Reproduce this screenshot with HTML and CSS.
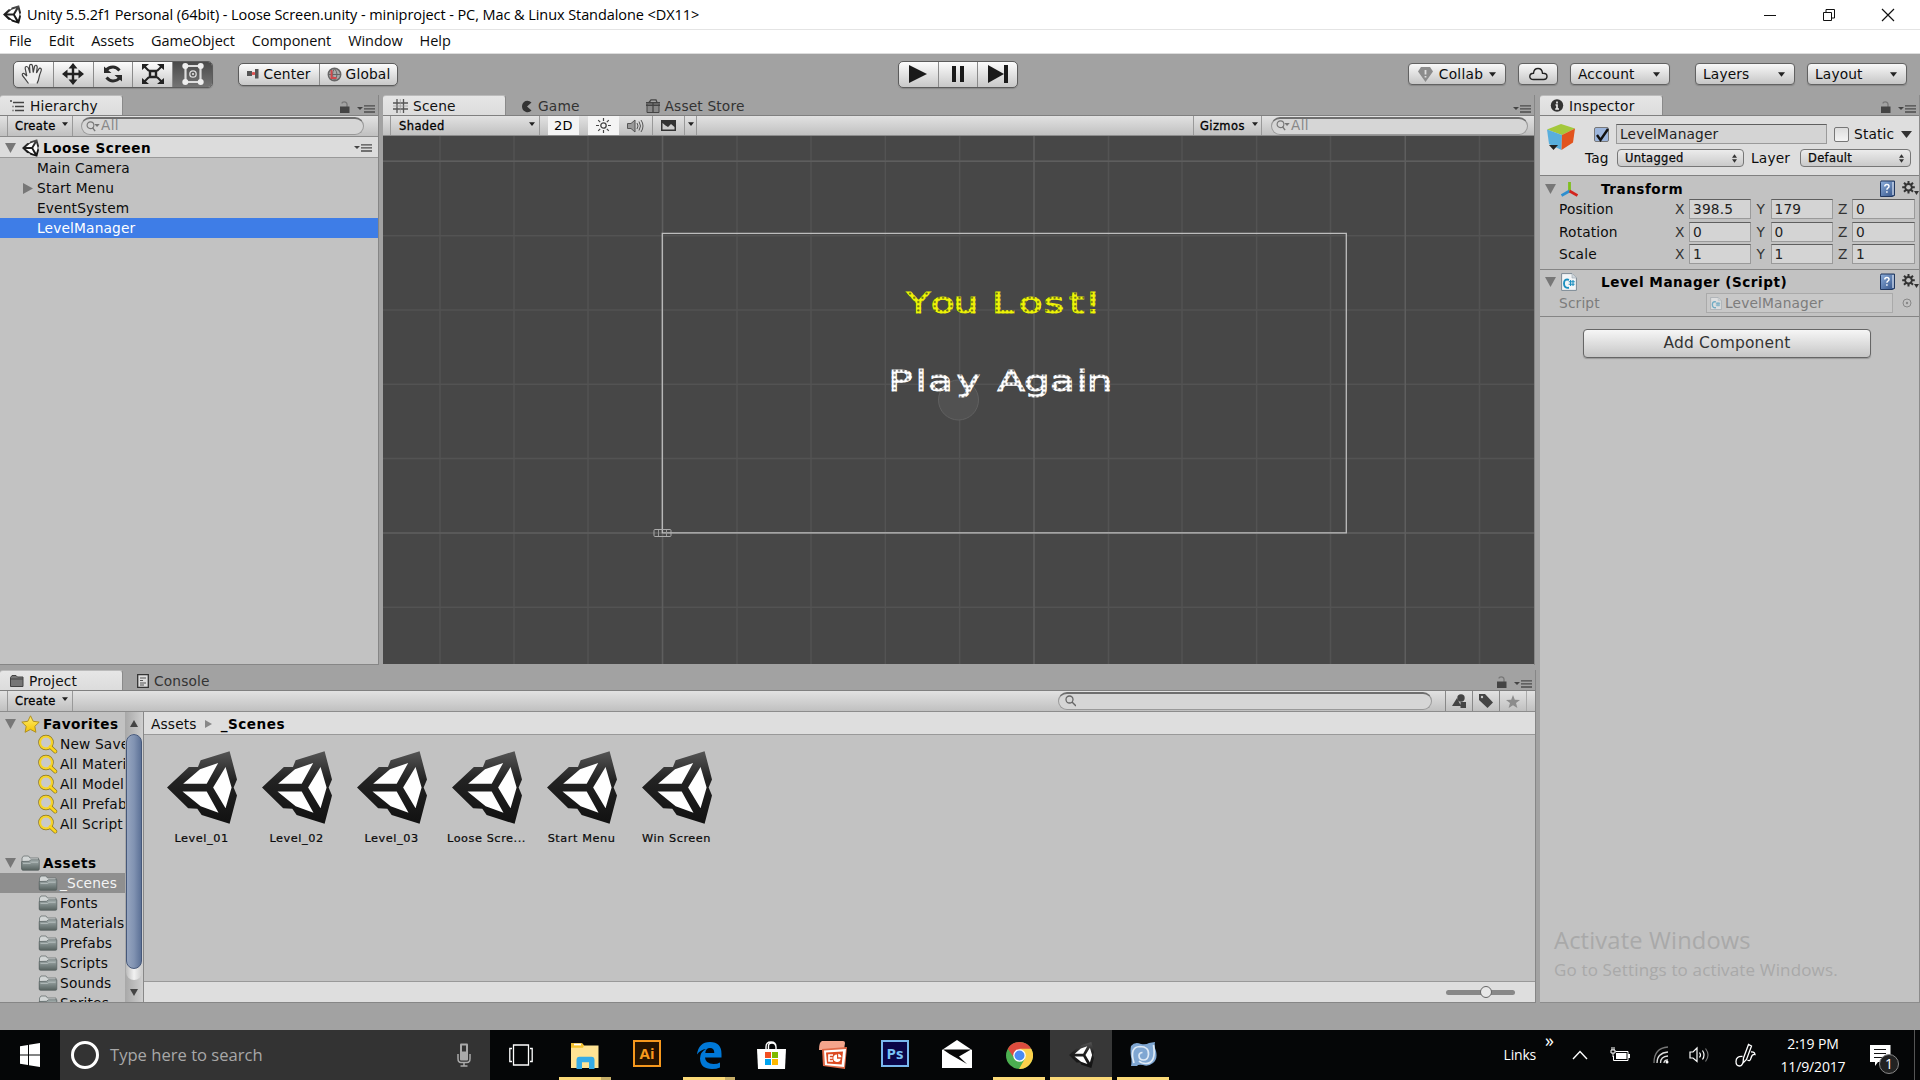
FILE: index.html
```html
<!DOCTYPE html>
<html lang="en">
<head>
<meta charset="utf-8">
<title>Unity 5.5.2f1 Personal (64bit) - Loose Screen.unity - miniproject</title>
<link rel="stylesheet" href="styles.css">
</head>
<body>
<svg class="defs" width="0" height="0">
  <defs>
    <linearGradient id="shade" x1="0" y1="0" x2="0" y2="1"><stop offset="0" stop-color="#555"/><stop offset=".4" stop-color="#222"/><stop offset="1" stop-color="#111"/></linearGradient>
    <linearGradient id="steel" x1="0" y1="0" x2="0" y2="1"><stop offset="0" stop-color="#a3adad"/><stop offset="1" stop-color="#56625f"/></linearGradient>
    <linearGradient id="gold" x1="0" y1="0" x2="0" y2="1"><stop offset="0" stop-color="#ffee70"/><stop offset="1" stop-color="#f5c400"/></linearGradient>
    <linearGradient id="book" x1="0" y1="0" x2="1" y2="1"><stop offset="0" stop-color="#8fb0dc"/><stop offset="1" stop-color="#2f4f86"/></linearGradient>
  </defs>
  <symbol id="unity" viewBox="0 0 208 216">
    <path fill="url(#shade)" d="M0 108 65 47H92L100 27 186 0 208 84 198 108 208 132 186 216 103 190 90 171 63 170Z"/>
    <path fill="#fff" d="M48 97 98 54 152 35 118 97ZM46 120H118L153 183 100 164ZM174 47 192 108 174 170 137 108Z"/>
  </symbol>
  <symbol id="folder" viewBox="0 0 19 16">
    <path d="M1 14V3l1.500-2h5L9 3h8.500v4H1z" fill="#d2d6d6" stroke="#697272" stroke-width=".8"/>
    <path d="M.7 6.500 8 6.300l2-1.500h8.300V14q0 1.300-1.300 1.300H2q-1.300 0-1.300-1.300z" fill="url(#steel)" stroke="#566060" stroke-width=".7"/>
    <path d="M2 8.500h7l1.500-1.200H17" fill="none" stroke="#c6cfcf" stroke-width=".6"/>
  </symbol>
  <symbol id="lens" viewBox="0 0 20 20">
    <path d="m12 12.500 5.300 5" stroke="#8a7420" stroke-width="3.800" stroke-linecap="round"/>
    <circle cx="8" cy="8.500" r="6" fill="none" stroke="#8a7420" stroke-width="3.500"/>
    <circle cx="8" cy="8.500" r="6" fill="#c9c9c9" stroke="#f6d428" stroke-width="2.200"/>
    <path d="m12 12.500 5.300 5" stroke="#fbd51c" stroke-width="2.600" stroke-linecap="round"/>
  </symbol>
  <symbol id="lock" viewBox="0 0 11 12">
    <path d="M3 2.500Q3 .8 5.300.8T8 3v3" fill="none" stroke="#777" stroke-width="1.300"/><path d="M1 5.500h9.500V12H1z" fill="#444"/>
  </symbol>
  <symbol id="menu" viewBox="0 0 18 8">
    <path d="M0 2h6L3 5z" fill="#444"/><path d="M7 .8h11M7 3.900h11M7 7h11" stroke="#4c4c4c" stroke-width="1.300"/>
  </symbol>
  <symbol id="open" viewBox="0 0 12 11"><path d="M0 0h12L6 11z" fill="#777"/></symbol>
  <symbol id="down" viewBox="0 0 8 5"><path d="M0 0h8L4 5z" fill="#222"/></symbol>
  <symbol id="help" viewBox="0 0 17 17">
    <path d="M2 1h13.500v14.500L13 16.500H1.500V2.500z" fill="url(#book)" stroke="#22385f"/><path d="M14 2v13" stroke="#dfe8f5" stroke-width="1.200"/>
    <path d="M5.800 6.500q0-2 2.100-2t2.100 1.800q0 1.200-1.200 1.800-.9.500-.9 1.700M7.900 11.200v1.500" fill="none" stroke="#fff" stroke-width="1.500"/>
  </symbol>
  <symbol id="gear" viewBox="0 0 17 16">
    <g stroke="#333" stroke-width="2"><path d="M6.500 0v12.500M.2 6.300h12.600M2 1.800l9 9M11 1.800l-9 9"/></g>
    <circle cx="6.500" cy="6.300" r="4.200" fill="#333"/><circle cx="6.500" cy="6.300" r="2.300" fill="#c2c2c2"/><path d="M12 10h5l-2.500 4z" fill="#333"/>
  </symbol>
  <symbol id="script" viewBox="0 0 16 18">
    <path d="M.6.600H11L15.400 5v12.400H.6z" fill="#f2f5f7" stroke="#7c8994"/><path d="M11 .6V5h4.400" fill="#d0d8de" stroke="#9aa5ad" stroke-width=".6"/>
    <path d="M8 6.800Q3 5.500 3 10.500t5 4.300" fill="none" stroke="#1b8fbf" stroke-width="1.900"/><path d="M9.600 7v6M12 7v6M7.800 8.800h6M7.600 11.200h6" stroke="#1b8fbf" stroke-width="1.100"/>
  </symbol>
  <symbol id="updown" viewBox="0 0 6 10"><path d="M0 4h6L3 0zM0 6h6l-3 4z" fill="#333"/></symbol>
  <symbol id="find" viewBox="0 0 16 13"><circle cx="5" cy="5" r="4" fill="none" stroke="#777" stroke-width="1.300"/><path d="m7.500 8 3 4" stroke="#777" stroke-width="1.600"/><path d="M9.500 3.500H16L12.800 7z" fill="#777"/></symbol>
</svg>

<header class="titlebar">
  <svg class="app-icon" width="18" height="19"><use href="#unity"/></svg>
  <span class="title">Unity 5.5.2f1 Personal (64bit) - Loose Screen.unity - miniproject - PC, Mac &amp; Linux Standalone &lt;DX11&gt;</span>
  <div class="controls">
    <svg width="14" height="14"><path d="M1 7.500h12" stroke="#111"/></svg>
    <svg width="14" height="14"><path d="M1.500 4.500h8v8h-8zM4 4V1.500h8.500V10H10" fill="none" stroke="#111"/></svg>
    <svg width="14" height="14"><path d="m1 1 12 12M13 1 1 13" stroke="#111" stroke-width="1.200"/></svg>
  </div>
</header>
<nav class="menubar"><span>File</span><span>Edit</span><span>Assets</span><span>GameObject</span><span>Component</span><span>Window</span><span>Help</span></nav>

<div class="toolbar">
  <div class="btns tools">
    <button><svg width="24" height="22" viewBox="0 0 24 22"><path d="M7.500 20.500 3 14.500Q.3 11.500 1.800 10.500t4 2.700L4.200 5.500q-.2-1.800 1-2T7.500 5L9 10 8.500 3q.2-1.700 1.500-1.700T11.500 3l.7 6.500L13.500 3.500q.5-1.500 1.700-1.200t1 2L15.500 10l2.300-4q.8-1.200 1.900-.6t.5 2.200q-2 5-2.300 7.400T16 20.500" fill="#eee" stroke="#444" stroke-width="1.200"/></svg></button>
    <button><svg width="22" height="22"><path d="M11 3v16M3 11h16" stroke="#222" stroke-width="2.400"/><path d="m11 0 4.500 5.500h-9zM11 22l4.500-5.500h-9zM0 11l5.500-4.500v9zM22 11l-5.500-4.500v9z" fill="#222"/></svg></button>
    <button><svg width="20" height="20"><path d="M3 6.500Q5.500 3 10 3q3.500 0 6.500 3.500M17 13.500q-2.500 3.500-7 3.500-3.500 0-6.500-3.500" fill="none" stroke="#2a2a2a" stroke-width="3"/><path d="M1 2.500v6.500h7.500zM19 17.500V11h-7.500z" fill="#2a2a2a"/></svg></button>
    <button><svg width="24" height="22"><path d="m3 3 5 5M21 3l-5 5M3 19l5-5M21 19l-5-5" stroke="#222" stroke-width="2"/><path d="M1 1h7L1 7zM23 1h-7l7 6zM1 21h7l-7-6zM23 21h-7l7-6z" fill="#222"/><path d="M9 8h6v6H9z" fill="#ddd" stroke="#222" stroke-width="2.400"/></svg></button>
    <button class="on"><svg width="22" height="22"><path d="M3.500 3h15v16h-15z" fill="none" stroke="#ddd" stroke-width="2.200"/><g fill="#eee"><circle cx="3.300" cy="3" r="3"/><circle cx="18.700" cy="3" r="3"/><circle cx="3.300" cy="19" r="3"/><circle cx="18.700" cy="19" r="3"/></g><circle cx="11" cy="11" r="3.200" fill="none" stroke="#ddd" stroke-width="1.300"/><circle cx="11" cy="11" r="1" fill="#eee"/></svg></button>
  </div>
  <div class="btns pivot">
    <button><svg width="12" height="11"><path d="M0 2h5v5H0z" fill="#555"/><path d="M5 4.500h3" stroke="#c33" stroke-width="2"/><path d="M8 0h3.500v9.500H8z" fill="#555"/><circle cx="6.500" cy="4.500" r="1.600" fill="#e05050"/></svg>Center</button>
    <button><svg width="15" height="15"><circle cx="7.500" cy="7.500" r="6.200" fill="#aaa" stroke="#666" stroke-width="1.500"/><path d="M1.500 7.500h12M7.500 1.500q-4 6 0 12M7.500 1.500q5 6 0 12" fill="none" stroke="#666"/><path d="M4.500 3v8h5" fill="none" stroke="#d2484c" stroke-width="1.900"/></svg>Global</button>
  </div>
  <div class="btns play">
    <button><svg width="20" height="18"><path d="M1 0v18l18-9z" fill="#1a1a1a"/></svg></button>
    <button><svg width="14" height="18"><path d="M1 1h4v16H1zM9 1h4v16H9z" fill="#1a1a1a"/></svg></button>
    <button><svg width="20" height="18"><path d="M0 0v18l16-9z" fill="#1a1a1a"/><path d="M16 0h4v18h-4z" fill="#1a1a1a"/></svg></button>
  </div>
  <div class="right-tools">
    <button class="b collab"><svg width="15" height="15"><path d="m3 0h9l3 4.500L7.500 15 0 4.500z" fill="#8c8c8c"/><path d="M7.500 3v4.500M7.500 9v1.500" stroke="#ddd" stroke-width="1.800"/></svg>Collab<svg width="7" height="5"><use href="#down"/></svg></button>
    <button class="b cloud"><svg width="19" height="14"><path d="M4.500 12.500q-3.700 0-3.700-3t3.700-3.200Q5 1.500 9 1.500t4.500 4.800q4.500-.2 4.500 3t-3.500 3.200z" fill="none" stroke="#222" stroke-width="1.400"/></svg></button>
    <button class="b drop">Account<svg width="7" height="5"><use href="#down"/></svg></button>
    <button class="b drop layers">Layers<svg width="7" height="5"><use href="#down"/></svg></button>
    <button class="b drop">Layout<svg width="7" height="5"><use href="#down"/></svg></button>
  </div>
</div>

<main class="dock">
  <div class="left">
    <div class="top">
      <section class="panel hierarchy">
        <div class="tabs">
          <div class="tab active"><svg width="15" height="12"><path d="M0 1h2M3 2.500h11M5 6.500h9M5 10.500h9M2.500 6.500h1M2.500 10.500h1" stroke="#444" stroke-width="1.500"/></svg>Hierarchy</div>
          <div class="tabtools"><svg width="11" height="12"><use href="#lock"/></svg><svg width="18" height="8"><use href="#menu"/></svg></div>
        </div>
        <div class="bar"><span class="create">Create<svg width="6" height="4"><use href="#down"/></svg></span><span class="search hs"><svg width="14" height="11"><use href="#find"/></svg>All</span></div>
        <div class="scene-row"><svg width="11" height="10"><use href="#open"/></svg><svg width="17" height="18"><use href="#unity"/></svg><b>Loose Screen</b><svg class="end" width="18" height="8"><use href="#menu"/></svg></div>
        <ul class="objects">
          <li>Main Camera</li>
          <li class="parent"><svg width="10" height="11"><path d="M0 0v11l10-5.500z" fill="#777"/></svg>Start Menu</li>
          <li>EventSystem</li>
          <li class="selected">LevelManager</li>
        </ul>
      </section>

      <section class="panel scene">
        <div class="tabs">
          <div class="tab active"><svg width="15" height="14"><path d="M4 0v14M10.500 0v14M0 4h15M0 10h15" stroke="#555" stroke-width="1.300"/><path d="M7.300 0v14M0 7h15" stroke="#999" stroke-width=".7"/></svg>Scene</div>
          <div class="tab game"><svg width="12" height="13"><path d="M10.500 2.500Q8 0 4.500 1 1 2.500 1 6.500T5 12q3.500.8 5.500-1.500L6 6.500z" fill="#333"/></svg>Game</div>
          <div class="tab store"><svg width="14" height="14"><path d="M1 5h12v8.500H1zM0 3.500h14v3H0z" fill="#888" stroke="#444"/><path d="M3 3.500 5 .8h5l1 2.700M7 3v10" fill="none" stroke="#444" stroke-width="1.300"/></svg>Asset Store</div>
          <div class="tabtools"><svg width="18" height="8"><use href="#menu"/></svg></div>
        </div>
        <div class="bar scene-bar">
          <span class="shade-mode">Shaded<svg width="6" height="4"><use href="#down"/></svg></span>
          <span class="toggle two">2D</span>
          <span class="toggle sun"><svg width="15" height="15"><circle cx="7.500" cy="7.500" r="2.700" fill="none" stroke="#444" stroke-width="1.300"/><path d="M7.500 0v3M7.500 12v3M0 7.500h3M12 7.500h3M2.200 2.200l2 2M10.800 10.800l2 2M12.800 2.200l-2 2M4.200 10.800l-2 2" stroke="#444" stroke-width="1.200"/></svg></span>
          <span class="sound"><svg width="17" height="14"><path d="M.5 4.500H4L8 1v12L4 9.500H.5z" fill="#999" stroke="#555"/><path d="M10 4q2 3 0 6M12 2.500q3 4.500 0 9M14 1q4 6 0 12" fill="none" stroke="#555"/></svg></span>
          <span class="fx"><svg width="15" height="11"><path d="M0 0h15v11H0z" fill="#333"/><path d="M1.500 8V3l3 2.500L7 7l3-3 3.500 3v2.500h-12z" fill="#ccc"/></svg></span>
          <span class="fxdrop"><svg width="6" height="4"><use href="#down"/></svg></span>
          <span class="gizmos">Gizmos<svg width="6" height="4"><use href="#down"/></svg></span>
          <span class="search ss"><svg width="14" height="11"><use href="#find"/></svg>All</span>
        </div>
        <svg class="viewport" viewBox="384 136 1151 528" width="1151" height="528">
          <defs>
            <pattern id="ydots" patternUnits="userSpaceOnUse" x="0" y="-21" width="2.950" height="4.200"><path fill="#eef505" d="M0 0h5v5H0z"/><ellipse cx="1.480" cy="2.100" rx=".75" ry="1.050" fill="#5d6018"/></pattern>
            <pattern id="wdots" patternUnits="userSpaceOnUse" x="0" y="-22" width="3.140" height="4.400"><path fill="#fff" d="M0 0h5v5H0z"/><ellipse cx="1.570" cy="2.200" rx=".75" ry="1.050" fill="#666"/></pattern>
          </defs>
          <path fill="#474747" d="M384 136h1151v528H384z"/>
          <g fill="none" stroke="#535353" stroke-width="1.500">
            <path d="M441 136v528M515 136v528M589 136v528M663.500 136v528M738 136v528M812 136v528M886.300 136v528M960.600 136v528M1035 136v528M1109.500 136v528M1183 136v528M1257.600 136v528M1331.500 136v528M1406.300 136v528M1480.500 136v528"/>
            <path d="M384 161.300h1151M384 235.700h1151M384 310h1151M384 384.300h1151M384 458.600h1151M384 533h1151M384 607.300h1151"/>
            <path stroke="#5e5e5e" stroke-width="1.400" d="M663.500 136v528M1035 136v528M1406.300 136v528M384 161.300h1151M384 533h1151"/>
          </g>
          <circle cx="959.500" cy="400" r="20" fill="#515151" stroke="#606060"/>
          <path d="M663.300 233.300h684v299.500h-684z" fill="none" stroke="#bdbdbd" stroke-width="1.300"/>
          <rect x="655" y="529.500" width="17" height="7" rx="1" fill="none" stroke="#aaa"/><path d="M659.500 530v6M667.500 530v6" stroke="#999"/>
          <g transform="translate(909 312.500) scale(1.400 1)"><text class="pixel" font-size="28" x="-1 16.300 32.500 50 60 79.100 97 115 126.500" fill="url(#ydots)" stroke="url(#ydots)">You Lost!</text></g>
          <g transform="translate(893.500 390.500) scale(1.400 1)"><text class="pixel" font-size="29" x="-3 16.500 25.300 45.500 62 74.800 94 112.500 131.500 138.700" fill="url(#wdots)" stroke="url(#wdots)">Play Again</text></g>
        </svg>
      </section>
    </div>

    <section class="panel project">
      <div class="tabs">
        <div class="tab active"><svg width="14" height="12"><path d="M.5 11V2.500L2 .5h4L7.500 2H13v9.500H.5z" fill="#777" stroke="#444"/><path d="M.5 4H13" stroke="#444"/></svg>Project</div>
        <div class="tab console"><svg width="12" height="14"><path d="M.7.700h10.600v12.600H.7z" fill="#ddd" stroke="#333" stroke-width="1.300"/><path d="M3 4h6M3 6.500h3M3 9h6M3 11h4" stroke="#555"/></svg>Console</div>
        <div class="tabtools"><svg width="11" height="12"><use href="#lock"/></svg><svg width="18" height="8"><use href="#menu"/></svg></div>
      </div>
      <div class="bar project-bar">
        <span class="create">Create<svg width="6" height="4"><use href="#down"/></svg></span>
        <span class="search ps"><svg width="11" height="12"><circle cx="4.500" cy="4.500" r="3.500" fill="none" stroke="#666" stroke-width="1.300"/><path d="m7 7 4 4" stroke="#666" stroke-width="1.500"/></svg></span>
        <span class="filter"><svg width="14" height="14"><circle cx="9" cy="4" r="3.700" fill="#444"/><path d="m5 4 4 8H0zM8.500 8H14v6H8.500z" fill="#444"/></svg></span>
        <span class="filter"><svg width="14" height="14"><path d="M0 0h6l8 8.500-5.500 5.500L0 6z" fill="#444"/><circle cx="3" cy="3" r="1.200" fill="#ccc"/></svg></span>
        <span class="filter last"><svg width="14" height="13"><path d="m7 0 1.800 4.700 5.200.2-4 3.200L11.400 13 7 10.200 2.600 13 4 8.100 0 4.900l5.200-.2z" fill="#8c8c8c"/></svg></span>
      </div>
      <div class="project-body">
        <div class="tree">
          <div class="root"><svg width="11" height="10"><use href="#open"/></svg><svg width="19" height="18" viewBox="0 0 19 18"><path d="m9.500.8 2.700 5.500 6 .8-4.400 4.200 1.100 6-5.400-2.900-5.400 2.900 1.100-6L.8 7.100l6-.8z" fill="url(#gold)" stroke="#b09020"/></svg><b>Favorites</b></div>
          <div class="leaf"><svg width="20" height="20"><use href="#lens"/></svg>New Save</div>
          <div class="leaf"><svg width="20" height="20"><use href="#lens"/></svg>All Materi</div>
          <div class="leaf"><svg width="20" height="20"><use href="#lens"/></svg>All Model</div>
          <div class="leaf"><svg width="20" height="20"><use href="#lens"/></svg>All Prefab</div>
          <div class="leaf"><svg width="20" height="20"><use href="#lens"/></svg>All Script</div>
          <div class="root assets"><svg width="11" height="10"><use href="#open"/></svg><svg width="19" height="16"><use href="#folder"/></svg><b>Assets</b></div>
          <div class="leaf current"><svg width="20" height="16"><use href="#folder"/></svg>_Scenes</div>
          <div class="leaf"><svg width="20" height="16"><use href="#folder"/></svg>Fonts</div>
          <div class="leaf"><svg width="20" height="16"><use href="#folder"/></svg>Materials</div>
          <div class="leaf"><svg width="20" height="16"><use href="#folder"/></svg>Prefabs</div>
          <div class="leaf"><svg width="20" height="16"><use href="#folder"/></svg>Scripts</div>
          <div class="leaf"><svg width="20" height="16"><use href="#folder"/></svg>Sounds</div>
          <div class="leaf"><svg width="20" height="16"><use href="#folder"/></svg>Sprites</div>
        </div>
        <div class="scroll"><svg width="8" height="7"><path d="M0 7h8L4 0z" fill="#444"/></svg><div class="track"><div class="thumb"></div></div><svg width="8" height="7"><path d="M0 0h8L4 7z" fill="#444"/></svg></div>
        <div class="files">
          <div class="crumbs">Assets<svg width="7" height="8"><path d="M0 0v8l7-4z" fill="#888"/></svg><b>_Scenes</b></div>
          <div class="grid">
            <figure><svg width="70" height="73"><use href="#unity"/></svg><figcaption>Level_01</figcaption></figure>
            <figure><svg width="70" height="73"><use href="#unity"/></svg><figcaption>Level_02</figcaption></figure>
            <figure><svg width="70" height="73"><use href="#unity"/></svg><figcaption>Level_03</figcaption></figure>
            <figure><svg width="70" height="73"><use href="#unity"/></svg><figcaption>Loose Scre...</figcaption></figure>
            <figure><svg width="70" height="73"><use href="#unity"/></svg><figcaption>Start Menu</figcaption></figure>
            <figure><svg width="70" height="73"><use href="#unity"/></svg><figcaption>Win Screen</figcaption></figure>
          </div>
          <div class="zoombar"><div class="slider"><i></i></div></div>
        </div>
      </div>
    </section>
  </div>

  <section class="panel inspector">
    <div class="tabs">
      <div class="tab active"><svg width="14" height="14"><circle cx="7" cy="6.500" r="6.200" fill="#333"/><path d="M7 2.500v2M5.500 6H7v4M5.200 10h3.800" stroke="#eee" stroke-width="1.700"/></svg>Inspector</div>
      <div class="tabtools"><svg width="11" height="12"><use href="#lock"/></svg><svg width="18" height="8"><use href="#menu"/></svg></div>
    </div>
    <div class="object-head">
      <svg class="cube" width="28" height="28" viewBox="0 0 28 28"><path d="M0 5.500 14 0l14 4.500L15 11z" fill="#a4c83c"/><path d="M0 5.500 15 11l-.5 15L2 20z" fill="#58aedd"/><path d="M28 4.500 15 11l-.5 15L26 18.500z" fill="#e2541e"/><path d="M2 21h9l-4.500 5z" fill="#222"/></svg>
      <div class="head-rows">
        <div class="head-row"><span class="check on"><svg width="14" height="14"><path d="m2 7 3.500 5L13 1" fill="none" stroke="#111" stroke-width="2.400"/></svg></span><span class="field name">LevelManager</span><span class="check"></span><span class="static">Static</span><svg width="11" height="7"><path d="M0 0h11L5.500 7z" fill="#333"/></svg></div>
        <div class="head-row second"><span class="tag">Tag</span><span class="select s1">Untagged<svg width="5" height="9"><use href="#updown"/></svg></span><span class="layer">Layer</span><span class="select s2">Default<svg width="5" height="9"><use href="#updown"/></svg></span></div>
      </div>
    </div>
    <div class="component transform">
      <div class="comp-title"><svg width="11" height="10"><use href="#open"/></svg><svg class="ico" width="17" height="17"><path d="M8.500 10V1" stroke="#7fbf1e" stroke-width="2.800"/><path d="m8.500 10-8 4.500" stroke="#2d8fd0" stroke-width="2.800"/><path d="m8.500 10 8 4.500" stroke="#d2241e" stroke-width="2.800"/></svg><b>Transform</b><svg class="help" width="17" height="17"><use href="#help"/></svg><svg width="17" height="16"><use href="#gear"/></svg></div>
      <div class="vec"><label>Position</label><i>X</i><span class="field">398.5</span><i>Y</i><span class="field">179</span><i>Z</i><span class="field">0</span></div>
      <div class="vec"><label>Rotation</label><i>X</i><span class="field">0</span><i>Y</i><span class="field">0</span><i>Z</i><span class="field">0</span></div>
      <div class="vec"><label>Scale</label><i>X</i><span class="field">1</span><i>Y</i><span class="field">1</span><i>Z</i><span class="field">1</span></div>
    </div>
    <div class="component script">
      <div class="comp-title"><svg width="11" height="10"><use href="#open"/></svg><svg class="ico" width="16" height="18"><use href="#script"/></svg><b>Level Manager (Script)</b><svg class="help" width="17" height="17"><use href="#help"/></svg><svg width="17" height="16"><use href="#gear"/></svg></div>
      <div class="script-row"><span>Script</span><span class="field"><svg width="12" height="13"><use href="#script"/></svg>LevelManager</span><svg width="10" height="10"><circle cx="5" cy="5" r="4" fill="none" stroke="#888"/><circle cx="5" cy="5" r="1.200" fill="#888"/></svg></div>
    </div>
    <button class="add">Add Component</button>
    <div class="watermark"><p>Activate Windows</p><p class="sub">Go to Settings to activate Windows.</p></div>
  </section>
</main>

<footer class="taskbar">
  <div class="start"><svg width="20" height="24" viewBox="0 0 20 24"><path d="M0 3.300 8 2v9.500H0zM9 1.800 20 0v11.500H9zM0 12.500h8V22l-8-1.300zM9 12.500h11V24L9 22.200z" fill="#fff"/></svg></div>
  <div class="cortana"><span class="ring"></span><span class="hint">Type here to search</span><svg width="14" height="24" viewBox="0 0 14 24"><rect x="3" y=".5" width="8" height="17" rx="1" fill="#aaa"/><path d="M5 2.500h4v6H5z" fill="#333"/><path d="M1 11v4.500q0 4 3 4h6q3 0 3-4V11M7 19v4M3.500 23h7" fill="none" stroke="#aaa" stroke-width="1.500"/></svg></div>
  <div class="apps">
    <div class="app view"><svg width="24" height="22"><path d="M4.500 1h15v20h-15zM3 4.500H.8v13H3M21 4.500h2.200v13H21" fill="none" stroke="#fff" stroke-width="1.300"/></svg></div>
    <div class="app run multi"><svg width="28" height="27" viewBox="0 0 28 24" preserveAspectRatio="none"><path d="M0 1h11l2 2h14.500v20H0z" fill="#ffe394"/><path d="M0 1h11l2 2-1 2H0z" fill="#f5c22e"/><path d="M3 1.500h7v1.500H3z" fill="#fff"/><path d="M5.500 24V16q0-3 3-3h12q3 0 3 3v8H18v-6h-7v6z" fill="#36abe6"/></svg></div>
    <div class="app"><span class="adobe ai">Ai</span></div>
    <div class="app run multi"><svg width="25" height="27" viewBox="0 0 25 27"><path d="M0 12.500Q1.500 0 13 0 24.500 0 24.500 12v3.500H8q.5 6.500 8.500 6.500 4 0 6.500-1.500v5Q19.500 27 15 27 3.500 27 3 16.500 3 10 9 7 3.500 7.500 0 12.500zM8.300 11h9q0-5-4.300-5T8.300 11z" fill="#0078d7"/></svg></div>
    <div class="app"><svg width="29" height="28"><path d="M9 9V6q0-5 5-5t5 5v3M11.500 9V5q0-3 3.500-3t4 4" fill="none" stroke="#fff" stroke-width="1.400"/><path d="M0 8h29l-1 20H1z" fill="#fff"/><path d="M8 11h6v6H8z" fill="#f25022"/><path d="M15 11h6v6h-6z" fill="#7fba00"/><path d="M8 18h6v6H8z" fill="#00a4ef"/><path d="M15 18h6v6h-6z" fill="#ffb900"/></svg></div>
    <div class="app"><svg width="29" height="28"><path d="M3 0h21q2 0 2 2l-1 7H0Q0 1 3 0z" fill="#f4a58c"/><path d="m3 8 25-2-2 22-22-3z" fill="#e06a48"/><path d="m5 9.500 22-1.500-2 18L6 24z" fill="#fff"/><path d="m7 11.500 17-1-1.300 13L8 22.500z" fill="#dc4a22"/><path d="M14 14h-4v6h4M10.500 17h3" fill="none" stroke="#fff" stroke-width="1.700"/><path d="M18 13.500a3.700 3.700 0 1 0 3.700 4.200H18zM19.200 12.800v3.500h3.300q-.3-3-3.300-3.500z" fill="#fff"/></svg></div>
    <div class="app"><span class="adobe ps-app">Ps</span></div>
    <div class="app"><svg class="mail" width="30" height="28" viewBox="0 0 30 28"><path d="M0 10 15 0l15 10v18H0z" fill="#fff"/><path d="M1 9.500h28L17 16.500 25 24 7.500 14z" fill="#080808"/></svg></div>
    <div class="app run"><svg width="27" height="27" viewBox="0 0 27 27"><circle cx="13.500" cy="13.500" r="13.500" fill="#4caf50"/><path d="M1.800 6.800a13.500 13.500 0 0 1 23.400 0L13.500 7.500 7.500 15z" fill="#dd4b3e"/><path d="M25.200 6.800A13.500 13.500 0 0 1 13 27l6-10.500-5.500-9.700z" fill="#fcd04b"/><circle cx="13.500" cy="13.500" r="6.300" fill="#fff"/><circle cx="13.500" cy="13.500" r="5" fill="#4a8af4"/></svg></div>
    <div class="app run focus"><svg width="25" height="26"><use href="#unity"/></svg></div>
    <div class="app run"><svg class="mono" width="27" height="25" viewBox="0 0 27 25"><path d="M1 4q4-5 10-2 5 1 8-1l6-1q-1 5 1 9 2 8-3 12-5 4-10 2-5-1-6 1H1q1-5 0-9-1-7 0-11z" fill="#7fa6d2"/><path d="M4 21Q-1 5 10 4.500q9 0 8.500 8-.5 5.500-5 5.500t-4.500-4.500q.3-3 3.500-3M23.500 3q3 18-7.500 18.500-4.500 0-7-2.500" fill="none" stroke="#dfeaf6" stroke-width="1.700"/></svg></div>
  </div>
  <div class="tray">
    <span class="links">Links</span><span class="more">»</span>
    <svg class="t-up" width="16" height="10"><path d="m1 9 7-7.500L15 9" fill="none" stroke="#fff" stroke-width="1.400"/></svg>
    <svg class="t-bat" width="21" height="16"><path d="M5.500 4.500h12.500v9H3.500V9" fill="none" stroke="#fff"/><path d="M6 6h10.500v6H6zM18 7h2v4h-2z" fill="#fff"/><path d="M1 3v3h4V3zM2 0v3M4 0v3M3 6v4" fill="none" stroke="#fff"/></svg>
    <svg class="t-wifi" width="17" height="18"><path d="M1 17Q1 2 15 1" fill="none" stroke="#777" stroke-width="1.300"/><path d="M4 17Q4 7 15 6M7.500 17Q7.500 10.500 15 10M11 17q0-3 4-3.200" fill="none" stroke="#ddd" stroke-width="1.300"/><circle cx="14" cy="16" r="1.500" fill="#fff"/></svg>
    <svg class="t-vol" width="21" height="18"><path d="M1 6h3l4-4v13.500L4 12H1z" fill="none" stroke="#fff" stroke-width="1.200"/><path d="M10.500 6.500q2 2.500 0 5M13.500 4.500q3 4.500 0 9" fill="none" stroke="#fff" stroke-width="1.200"/><path d="M16.500 2.500q5 6.500 0 13" fill="none" stroke="#777" stroke-width="1.200"/></svg>
    <svg class="t-pen" width="21" height="24" viewBox="0 0 21 24"><path d="m8.500 15 5-13.500 3 1.500-5 13.500L8 20zM7.500 13.500Q1 13 1 18.500 1 23 4.500 23t4-7M12.500 17q2.500 2 3.500-2t4-3.500q-.5-3-4-2.500" fill="none" stroke="#fff" stroke-width="1.300"/></svg>
    <div class="clock"><span>2:19 PM</span><span>11/9/2017</span></div>
    <div class="notes"><svg width="21" height="21"><path d="M0 0h20.500v17H8l-3 4v-4H0z" fill="#fff"/><path d="M4 4.500h12M4 8.500h12M4 12.500h12" stroke="#111" stroke-width="1.200"/></svg><em>1</em></div>
    <div class="peek"></div>
  </div>
</footer>
</body>
</html>
```
FILE: styles.css
```css
* { box-sizing: border-box; margin: 0; padding: 0; }
html, body { width: 1920px; height: 1080px; overflow: hidden; }
body { display: flex; flex-direction: column; background: #a2a2a2; color: #0c0c0c; font: 13.75px/20px "DejaVu Sans", sans-serif; letter-spacing: .15px; }
svg { display: block; flex: none; }
.defs { position: absolute; }
button { font: inherit; color: inherit; letter-spacing: inherit; border: 0; background: none; }
span, b, label, figcaption { white-space: nowrap; }
b { color: #000; }

/* window chrome */
.titlebar { height: 30px; background: #fff; border-bottom: 1px solid #e4e4e4; display: flex; align-items: center; padding-left: 3px; font-family: "Open Sans", sans-serif; color: #000; }
.title { margin-left: 6px; font-size: 14.5px; letter-spacing: -.075px; }
.controls { margin-left: auto; display: flex; gap: 45px; padding-right: 25px; }
.menubar { height: 24px; background: #fff; border-bottom: 1px solid #ddd; display: flex; gap: 17px; padding: 1px 9px; font: 14.500px/20px "Open Sans", sans-serif; letter-spacing: -.06px; }

.toolbar { height: 41px; display: flex; align-items: center; padding: 0 13px 1px 13px; }
.btns { display: flex; border: 1px solid #5c5c5c; border-radius: 5px; overflow: hidden; background: linear-gradient(#fcfcfc, #c8c8c8); box-shadow: 0 1px 1px #888; }
.btns button { flex: 1; display: flex; align-items: center; justify-content: center; border-left: 1px solid #8a8a8a; }
.btns button:first-child { border-left: 0; }
.tools { width: 200px; height: 27px; }
.tools .on { background: linear-gradient(#4a4a4a, #747474); }
.pivot { width: 160px; height: 23px; margin-left: 25px; }
.pivot button { gap: 4px; }
.pivot button:first-child { flex: 0 0 80px; }
.play { width: 120px; height: 27px; margin-left: 500px; }
.right-tools { display: flex; margin-left: auto; }
.b { height: 22px; border: 1px solid #626262; border-radius: 4px; background: linear-gradient(#f8f8f8, #c6c6c6); box-shadow: 0 1px 1px #888; display: flex; align-items: center; justify-content: center; line-height: 20px; }
.collab { width: 98px; gap: 6px; letter-spacing: .25px; }
.cloud { width: 40px; margin: 0 12px; }
.drop { width: 100px; justify-content: space-between; padding: 0 9px 0 7px; }
.layers { margin: 0 12px 0 25px; }

/* docked panels */
.dock { height: 935px; display: flex; gap: 4px; }
.left { width: 1536px; height: 908px; display: flex; flex-direction: column; gap: 5px; }
.top { display: flex; height: 570px; gap: 4px; }
.panel { display: flex; flex-direction: column; min-width: 0; }
.tabs { height: 20px; display: flex; align-items: flex-end; flex: none; }
.tab { height: 20px; display: flex; align-items: center; gap: 5px; padding: 2px 0 0 10px; line-height: 18px; color: #333; }
.tab.active { width: 123px; background: linear-gradient(#e6e6e6, #dcdcdc); border-radius: 3px 3px 0 0; border-right: 1px solid #8a8a8a; border-top: 1px solid #bbb; color: #111; padding-top: 0; }
.tabtools { margin-left: auto; display: flex; align-items: flex-end; gap: 7px; padding: 0 3px 2px 0; }
.bar { height: 22px; flex: none; border-top: 1px solid #808080; border-bottom: 1px solid #8c8c8c; background: linear-gradient(#e2e2e2, #c0c0c0); display: flex; align-items: center; font-size: 11.500px; letter-spacing: .4px; color: #000; }
.bar span { display: flex; align-items: center; }
.create { height: 20px; margin-left: 7px; width: 66px; border: solid #999; border-width: 0 1px; justify-content: space-between; padding: 0 4px 0 7px; -webkit-text-stroke: .3px #000; }
.create svg, .shade-mode svg, .gizmos svg, .fxdrop svg { margin-top: -4px; }
.search { height: 18px; border: 1px solid #999; border-top: 2px solid #6e6e6e; border-radius: 9px; background: #d6d6d6; color: #888; padding: 0 0 3px 4px; font-size: 13.500px; }
.search svg { margin: 2px 1px 0 0; }

.hierarchy { width: 379px; border-right: 1px solid #868686; border-bottom: 1px solid #868686; background: #c2c2c2; }
.hierarchy .tabs, .project .tabs, .inspector .tabs { background: #a2a2a2; }
.hs { width: 283px; margin-left: 8px; }
.scene-row { height: 21px; background: #dcdcdc; border-bottom: 1px solid #999; display: flex; align-items: center; padding: 1px 6px 0 5px; }
.scene-row svg:nth-child(2) { margin: 0 4px 0 6px; }
.end { margin-left: auto; }
.scene-row b, .root b, .comp-title b, .crumbs b { font-size: 13.600px; letter-spacing: .5px; }
.objects { list-style: none; }
.objects li { height: 20px; padding-left: 37px; line-height: 20px; }
.objects .parent { display: flex; align-items: center; gap: 4px; padding-left: 23px; }
.objects .selected { background: #3e7de7; color: #fff; }

.scene { width: 1152px; border-right: 1px solid #868686; }
.game { margin-left: 5px; }
.store { margin-left: 56px; }
.scene-bar { height: 21px; padding-left: 7px; }
.shade-mode { width: 150px; height: 19px; border-left: 1px solid #999; border-right: 1px solid #999; justify-content: space-between; padding: 0 4px 0 8px; -webkit-text-stroke: .3px #000; }
.toggle { height: 19px; background: #f4f4f4; justify-content: center; }
.two { width: 31px; margin-left: 8px; font-size: 13px; }
.sun { width: 31px; margin-left: 9px; }
.sound { width: 34px; justify-content: center; height: 19px; border-right: 1px solid #999; }
.fx { width: 31px; justify-content: center; }
.fxdrop { width: 13px; height: 19px; border: solid #999; border-width: 0 1px; justify-content: center; }
.gizmos { margin-left: auto; width: 69px; height: 19px; border: solid #999; border-width: 0 1px; justify-content: space-between; padding: 0 3px 0 6px; -webkit-text-stroke: .3px #000; }
.ss { width: 257px; margin: 0 6px 0 9px; }
.pixel { font-family: "DejaVu Sans", sans-serif; stroke-width: .9px; letter-spacing: 0; }

.project { width: 1536px; height: 333px; border: solid #868686; border-width: 0 1px 1px 0; }
.console { margin-left: 4px; }
.ps { width: 374px; margin-left: auto; padding-left: 6px; }
.filter { width: 27px; height: 20px; border-left: 1px solid #888; justify-content: center; }
.ps + .filter { margin-left: 13px; }
.filter.last { width: 28px; border-right: 1px solid #aaa; margin-right: 8px; }
.project-body { flex: 1; min-height: 0; display: flex; background: #c2c2c2; }
.tree { width: 125px; overflow: hidden; padding-top: 2px; }
.root { height: 20px; display: flex; align-items: center; padding-left: 5px; }
.root svg:nth-child(2) { margin: 0 4px 0 5px; }
.root b { position: relative; left: -1px; }
.assets { margin-top: 19px; }
.leaf { height: 20px; display: flex; align-items: center; gap: 2px; padding-left: 38px; white-space: nowrap; }
.current { background: #8f8f8f; color: #f4f4f4; }
.scroll { width: 18px; display: flex; flex-direction: column; align-items: center; background: linear-gradient(90deg, #a8a8a8, #cfcfcf); padding: 8px 0 6px; }
.track { flex: 1; width: 16px; margin: 7px 0 9px; border-radius: 8px; background: linear-gradient(90deg, #bbb, #f2f2f2, #ccc); }
.thumb { height: 235px; border-radius: 8px; border: 1px solid #46587a; background: linear-gradient(90deg, #96a5bf, #8193b2 50%, #5d7297); }
.files { flex: 1; border-left: 1px solid #888; display: flex; flex-direction: column; }
.crumbs { height: 23px; background: #dedede; border-bottom: 1px solid #999; display: flex; align-items: center; padding: 1px 0 0 7px; }
.crumbs svg { margin: 0 9px 0 8px; }
.grid { flex: 1; display: flex; padding: 16px 0 0 10px; }
figure { width: 95px; display: flex; flex-direction: column; align-items: center; }
figcaption { margin-top: 5px; font-size: 11.300px; letter-spacing: .55px; line-height: 20px; -webkit-text-stroke: .2px #000; }
.zoombar { height: 21px; background: #dedede; border-top: 1px solid #999; display: flex; justify-content: flex-end; align-items: center; padding-right: 20px; }
.slider { width: 69px; height: 5px; border-radius: 3px; background: #888; display: flex; align-items: center; justify-content: center; padding-left: 11px; }
.slider i { width: 12px; height: 12px; border-radius: 50%; border: 1.500px solid #666; background: #e8e8e8; }

/* inspector */
.inspector { width: 380px; height: 908px; background: #c2c2c2; border: solid #8c8c8c; border-width: 0 1px 1px 0; position: relative; }
.object-head { height: 61px; background: #dedede; border: solid #808080; border-width: 1px 0; display: flex; padding: 8px 7px 0 7px; }
.head-rows { flex: 1; margin-left: 10px; }
.head-row { display: flex; align-items: center; height: 20px; padding-left: 9px; }
.check { width: 15px; height: 15px; border: 1px solid #777; border-radius: 2px; background: linear-gradient(#ddd, #f4f4f4); }
.check.on { background: #9db6dd; }
.field { height: 20px; border: 1px solid #9a9a9a; border-top-color: #5f5f5f; background: #d4d4d4; padding-left: 3px; line-height: 18px; color: #222; }
.name { width: 211px; margin: 0 7px; }
.static { margin: 0 7px 0 5px; }
.second { margin-top: 4px; padding: 0; }
.tag { width: 34px; margin-right: -2px; }
.select { height: 18px; border: 1px solid #777; border-radius: 4px; background: linear-gradient(#ececec, #cacaca); display: flex; align-items: center; justify-content: space-between; padding: 0 6px 0 7px; font-size: 11.500px; letter-spacing: .3px; -webkit-text-stroke: .25px #000; }
.s1 { width: 127px; }
.layer { margin: 0 8px 0 7px; width: 41px; }
.s2 { width: 111px; }
.component { border-bottom: 1px solid #858585; }
.transform { height: 94px; }
.comp-title { display: flex; align-items: center; height: 23px; padding: 3px 0 0 5px; }
.ico { margin: 0 23px 0 5px; }
.help { margin: -2px 6px 0 auto; }
.vec { display: flex; height: 22.500px; align-items: center; padding: 0 0 2px 19px; }
.vec label { width: 116px; }
.vec i { font-style: normal; width: 14px; color: #333; }
.vec .field { width: 62px; margin-right: 5.500px; }
.vec .field:last-child { margin: 0; width: 63px; }
.script { height: 47px; }
.script .comp-title { height: 23px; padding-top: 1px; }
.script .ico { margin-right: 24px; }
.script-row { display: flex; align-items: center; padding-left: 19px; height: 20px; color: #7c7c7c; }
.script-row span:first-child { width: 147px; }
.script-row .field { width: 187px; margin-right: 9px; display: flex; align-items: center; gap: 3px; border-color: #aaa; background: #c8c8c8; color: #7c7c7c; }
.script-row .field svg { opacity: .5; }
.add { width: 288px; height: 29px; margin: 12px 0 0 43px; padding-bottom: 2px; border: 1px solid #666; border-radius: 4px; background: linear-gradient(#f6f6f6, #c6c6c6); box-shadow: 0 1px 1px #999; font-size: 15.500px; color: #333; }
.watermark { position: absolute; left: 14px; top: 828px; color: #a9a9a9; font: 23.700px/34px "Open Sans", sans-serif; white-space: nowrap; }
.watermark .sub { font-size: 17px; line-height: 26px; }

/* taskbar */
.taskbar { height: 50px; background: #050607; display: flex; color: #fff; font-family: "Open Sans", sans-serif; letter-spacing: 0; }
.start { width: 60px; display: grid; place-items: center; }
.cortana { width: 430px; background: #333; display: flex; align-items: center; padding: 0 19px 0 11px; }
.ring { width: 28px; height: 28px; border: 3.500px solid #fff; border-radius: 50%; }
.hint { margin-left: 11px; margin-right: auto; font-size: 16.600px; color: #a8a8a8; }
.apps { display: flex; }
.app { width: 62px; height: 50px; display: flex; align-items: center; justify-content: center; border: solid transparent; border-width: 0 5px; background-clip: padding-box; }
.app.view { width: 64px; padding-right: 3px; }
.app.run { background: linear-gradient(#fbd977, #fbd977) 0 47px / 100% 3px no-repeat padding-box; }
.app.multi { background: linear-gradient(90deg, #fbd977 80%, #c7ae68 80%) 0 47px / 100% 3px no-repeat padding-box; }
.app.focus { border: 0; background: linear-gradient(#fbd977, #fbd977) 0 47px / 100% 3px no-repeat, #373737; }
.mail, .mono { margin-bottom: 2px; }
.adobe { width: 28px; height: 27px; margin-bottom: 3px; border: 2px solid #f7981d; background: #261300; color: #f7981d; font: 700 15px/22px "Open Sans", sans-serif; text-align: center; }
.ps-app { border-color: #79b8ee; background: #0a0648; color: #79c2f5; }
.tray { margin-left: auto; display: flex; align-items: center; font-size: 14px; }
.links { margin-right: 9px; letter-spacing: -.2px; }
.more { margin: -30px 18px 0 0; font-size: 18px; }
.t-bat { margin-left: 22px; }
.t-wifi { margin-left: 22px; }
.t-vol { margin-left: 19px; }
.t-pen { margin-left: 25px; }
.clock { width: 90px; margin: 0 12px; display: flex; flex-direction: column; text-align: center; line-height: 23px; }
.clock span { letter-spacing: -.15px; }
.notes { position: relative; }
.notes em { position: absolute; left: 9px; top: 9px; width: 20px; height: 20px; border-radius: 50%; border: 1px solid #888; background: #222; font: 14px/18px "Open Sans", sans-serif; text-align: center; }
.peek { width: 6px; height: 50px; border-left: 1px solid #555; margin-left: 23px; }
```
